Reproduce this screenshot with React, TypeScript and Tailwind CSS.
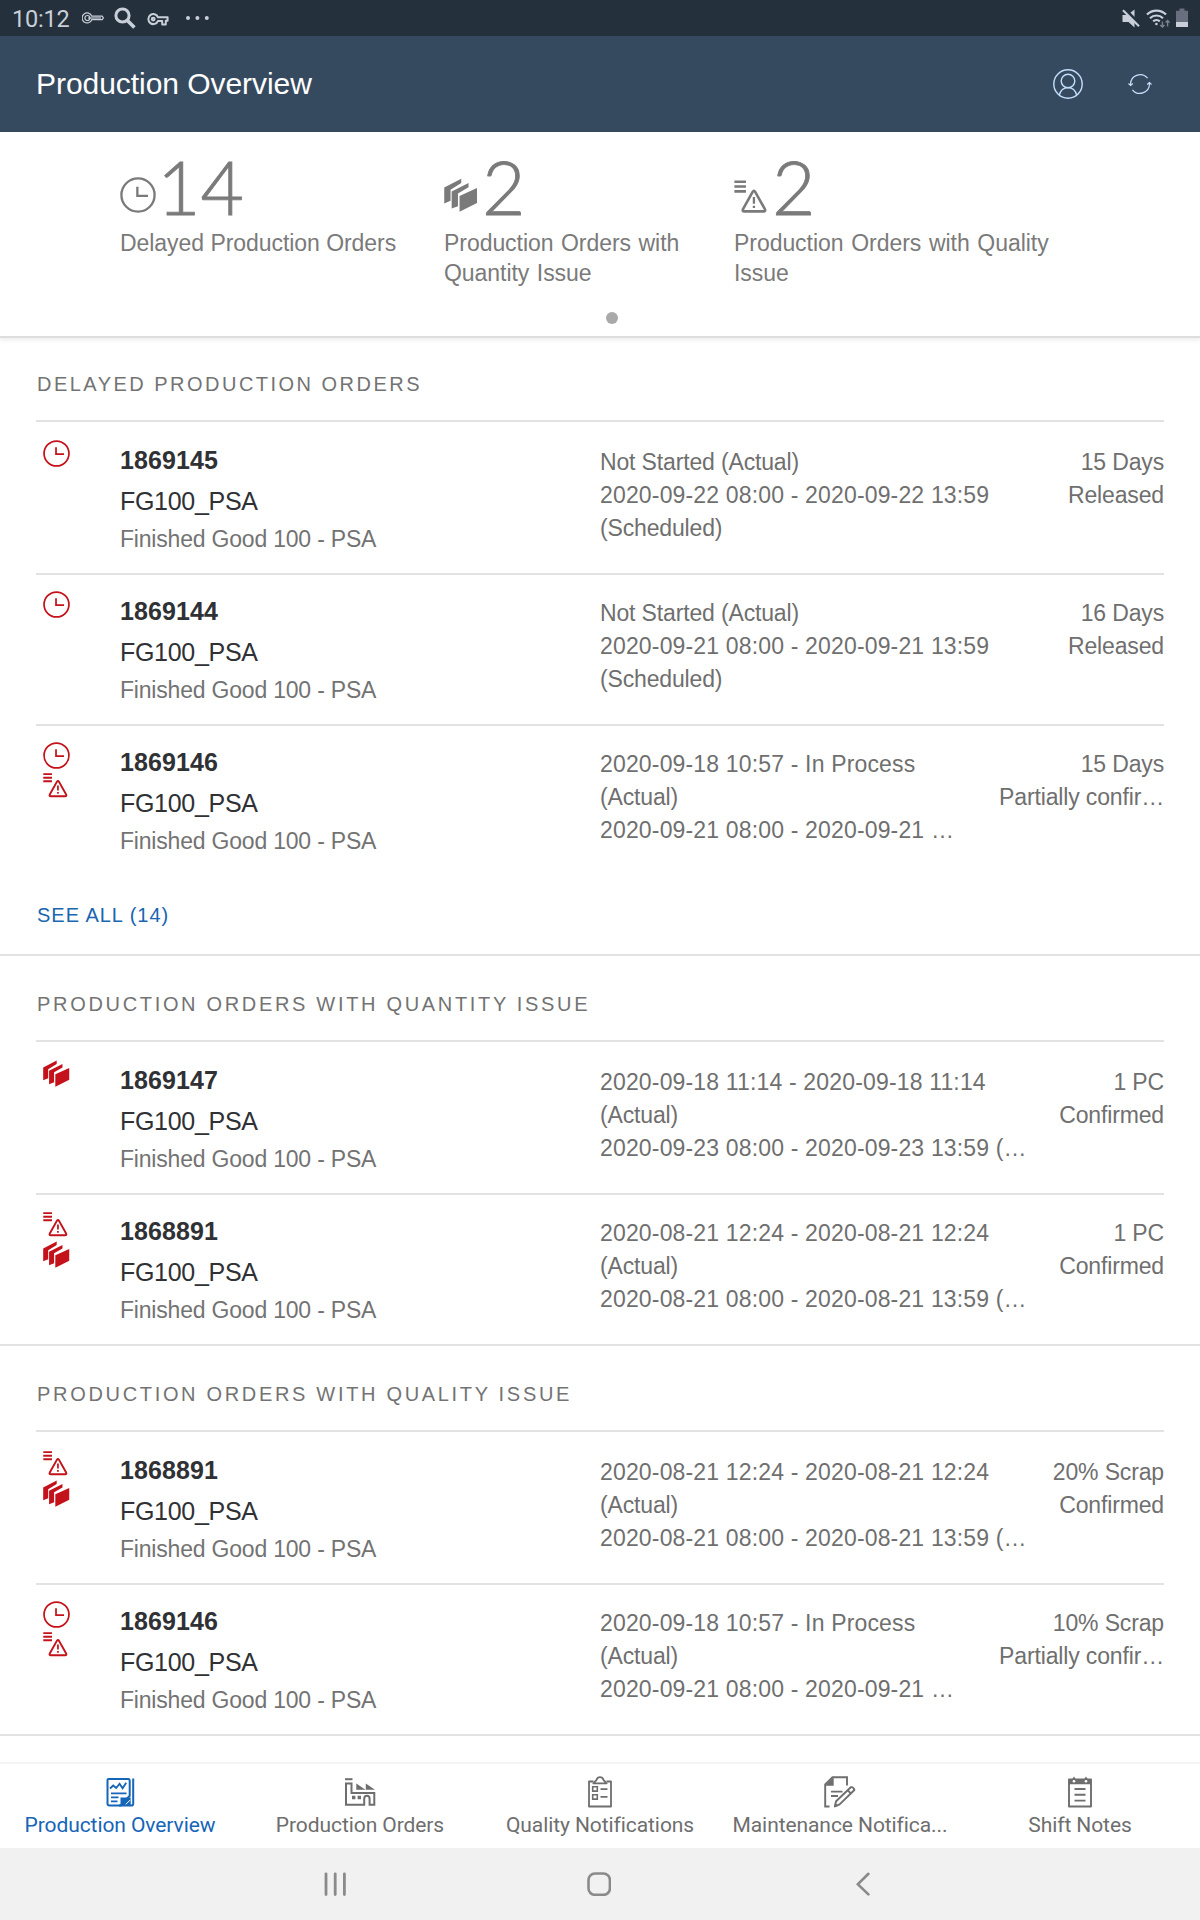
import { ReactNode } from "react";
import clsx from "clsx";

type IssueIcon = "delay" | "quality" | "quantity";

interface Order {
    id: string;
    icons: IssueIcon[];
    lines: string[];
    value: string;
    status: string;
}

interface Section {
    title: string;
    orders: Order[];
    seeAll?: string;
}

const SECTIONS: Section[] = [
    {
        title: "DELAYED PRODUCTION ORDERS",
        seeAll: "SEE ALL (14)",
        orders: [
            {
                id: "1869145",
                icons: ["delay"],
                lines: ["Not Started (Actual)", "2020-09-22 08:00 - 2020-09-22 13:59", "(Scheduled)"],
                value: "15 Days",
                status: "Released",
            },
            {
                id: "1869144",
                icons: ["delay"],
                lines: ["Not Started (Actual)", "2020-09-21 08:00 - 2020-09-21 13:59", "(Scheduled)"],
                value: "16 Days",
                status: "Released",
            },
            {
                id: "1869146",
                icons: ["delay", "quality"],
                lines: ["2020-09-18 10:57 - In Process", "(Actual)", "2020-09-21 08:00 - 2020-09-21 …"],
                value: "15 Days",
                status: "Partially confir…",
            },
        ],
    },
    {
        title: "PRODUCTION ORDERS WITH QUANTITY ISSUE",
        orders: [
            {
                id: "1869147",
                icons: ["quantity"],
                lines: ["2020-09-18 11:14 - 2020-09-18 11:14", "(Actual)", "2020-09-23 08:00 - 2020-09-23 13:59 (…"],
                value: "1 PC",
                status: "Confirmed",
            },
            {
                id: "1868891",
                icons: ["quality", "quantity"],
                lines: ["2020-08-21 12:24 - 2020-08-21 12:24", "(Actual)", "2020-08-21 08:00 - 2020-08-21 13:59 (…"],
                value: "1 PC",
                status: "Confirmed",
            },
        ],
    },
    {
        title: "PRODUCTION ORDERS WITH QUALITY ISSUE",
        orders: [
            {
                id: "1868891",
                icons: ["quality", "quantity"],
                lines: ["2020-08-21 12:24 - 2020-08-21 12:24", "(Actual)", "2020-08-21 08:00 - 2020-08-21 13:59 (…"],
                value: "20% Scrap",
                status: "Confirmed",
            },
            {
                id: "1869146",
                icons: ["delay", "quality"],
                lines: ["2020-09-18 10:57 - In Process", "(Actual)", "2020-09-21 08:00 - 2020-09-21 …"],
                value: "10% Scrap",
                status: "Partially confir…",
            },
        ],
    },
];

function IconDelay({ className }: { className?: string }) {
    return (
        <svg viewBox="0 0 28 28" fill="none" stroke="currentColor" strokeWidth="1.8" className={className}>
            <circle cx="14" cy="14" r="12.9" />
            <path d="M13.5 7.5v7.2h8.3" />
        </svg>
    );
}

function IconQuality({ className }: { className?: string }) {
    return (
        <svg viewBox="0 0 28 28" fill="none" stroke="currentColor" strokeWidth="2" className={className}>
            <path d="M0.3 2.2h9M0.3 5.9h9M0.3 9.6h9" />
            <path d="M14.5 10q1-1.6 2 0l7.5 13.4q.8 1.8-1 1.8H8q-1.8 0-1-1.8z" strokeLinejoin="round" />
            <path d="M15.5 14v5.2M15.5 20.8v1.8" strokeWidth="1.8" />
        </svg>
    );
}

function IconQuantity({ className }: { className?: string }) {
    return (
        <svg viewBox="0 0 28 28" fill="currentColor" className={className}>
            <path d="M0.2 7.8L14.2 0.6v3.6L5.4 9.6v9.2L0.2 21z" />
            <path d="M6.3 11.1L20.2 4.1v3.6L11.5 12.8v10.4l-5.2 2z" />
            <path d="M12.8 14.8L27.2 8.2v12.4l-14.4 7.2z" />
        </svg>
    );
}

const ISSUE_ICONS = {
    delay: IconDelay,
    quality: IconQuality,
    quantity: IconQuantity,
};

function StatusBar() {
    return (
        <div className="flex h-9 items-center bg-[#24303c] pr-[12px] pl-[12px] text-[#c9cfd8]">
            <span className="pt-[2px] font-[Roboto,sans-serif] text-[23.5px] leading-9 tracking-[-0.2px]">10:12</span>
            <svg viewBox="0 0 22 12" className="ml-[12px] h-3 w-[22px]" fill="none" stroke="currentColor" strokeWidth="1.2">
                <path d="M9.8 4.2h10.4l1.2 1.7-1.2 1.8H9.8A5 5 0 1 1 9.8 4.2z" />
                <circle cx="5.4" cy="6" r="2.5" />
                <path d="M6 6h13" />
            </svg>
            <svg viewBox="0 0 22 22" className="ml-[10px] h-[22px] w-[22px]" fill="none" stroke="currentColor" strokeWidth="3">
                <circle cx="8.5" cy="8.5" r="6.6" />
                <path d="M13.4 13.4l7 7" strokeWidth="3.6" />
            </svg>
            <svg viewBox="0 0 22 13" className="mt-[2px] ml-[11px] h-[13px] w-[22px]" fill="none" stroke="currentColor" strokeWidth="2">
                <path d="M11 4.3h9.6v3.4h-1.8v3.8h-3.6V7.9H11a5 5 0 1 1 0-3.6z" strokeLinejoin="round" />
                <circle cx="6.2" cy="6.1" r="1.4" />
            </svg>
            <svg viewBox="0 0 24 4" className="ml-[17px] h-1 w-6" fill="currentColor">
                <circle cx="2" cy="2" r="2" />
                <circle cx="11.4" cy="2" r="2" />
                <circle cx="20.8" cy="2" r="2" />
            </svg>
            <div className="ml-auto flex items-center">
                <svg viewBox="0 0 18 19" className="h-[19px] w-[18px]" fill="currentColor">
                    <path d="M0.5 6h5l7-5.5v18l-6-5.5h-6z" />
                    <path d="M0 0l18 18" stroke="#24303c" strokeWidth="3.4" transform="translate(1.2 -1.2)" />
                    <path d="M1 1.2l16 16" stroke="currentColor" strokeWidth="2.2" />
                </svg>
                <svg viewBox="0 0 24 19" className="ml-[6px] h-[19px] w-6" fill="none" stroke="currentColor" strokeWidth="2.2">
                    <path d="M1 5.6a13.2 13.2 0 0 1 19 0M4 9.2a9.2 9.2 0 0 1 13 0M7.2 12.4a4.8 4.8 0 0 1 6.6 0" />
                    <circle cx="10.4" cy="15" r="1.3" fill="currentColor" stroke="none" />
                    <g stroke="#78818c" strokeWidth="1.4">
                        <path d="M16.4 12.5v5.4M14.3 15.9l2.1 2.2 2.1-2.2M21.6 17.5v-5.6M19.6 13.6l2-2.1 2 2.1" />
                    </g>
                </svg>
                <svg viewBox="0 0 12 19" className="mb-[2px] ml-[6px] h-[19px] w-3">
                    <path d="M3.5 0.5h5v2.2H12V19H0V2.7h3.5z" fill="#696f7e" />
                    <path d="M0 14h12v5H0z" fill="#c9cfd8" />
                </svg>
            </div>
        </div>
    );
}

function AppHeader() {
    return (
        <header className="flex h-24 items-center bg-[#364a5f] pr-12 pl-9">
            <h1 className="pb-[2px] text-[30px] tracking-[-0.05px] text-white">Production Overview</h1>
            <svg viewBox="0 0 30 30" className="ml-auto h-[30px] w-[30px]" fill="none" stroke="#c3dffc" strokeWidth="1.4">
                <circle cx="15" cy="15" r="14.2" />
                <circle cx="15" cy="12" r="6.8" />
                <path d="M6.3 26.2c1.2-5 4.4-7.6 8.7-7.6s7.5 2.6 8.7 7.6" />
            </svg>
            <svg viewBox="0 0 24 22" className="ml-[45px] h-[22px] w-6" fill="none" stroke="#c3dffc" strokeWidth="1.2">
                <path d="M2.6 12A9.6 9.6 0 0 1 19.6 5.2M21.4 10A9.6 9.6 0 0 1 4.4 16.8" />
                <path d="M0.5 10.5l2.1 2 2.2-2M19.2 11.5l2.2-2 2.1 2" />
            </svg>
        </header>
    );
}

function Kpi({ icon, value, label, className }: { icon: ReactNode; value: string; label: ReactNode; className: string }) {
    return (
        <div className={className}>
            <div className="flex h-[68px] items-end">
                {icon}
                <span className="font-[Lato,sans-serif] text-[75px] leading-[64px] font-light [-webkit-text-stroke:0.8px_#7a7a7a]">
                    {value}
                </span>
            </div>
            <p className="mt-[10px] text-[23px] leading-[30px] tracking-[-0.05px] whitespace-nowrap">{label}</p>
        </div>
    );
}

function KpiHeader() {
    return (
        <div className="h-[206px] border-b-2 border-[#dedede] bg-white pt-[18px] text-[#7a7a7a] shadow-[0_2px_5px_rgba(0,0,0,0.08)]">
            <div className="flex pl-[120px]">
                <Kpi
                    className="w-[324px]"
                    icon={<IconDelay className="mr-px mb-[5px] h-9 w-9" />}
                    value="14"
                    label="Delayed Production Orders"
                />
                <Kpi
                    className="w-[290px] [word-spacing:1.2px]"
                    icon={<IconQuantity className="mr-[4px] mb-[5px] h-9 w-[34px]" />}
                    value="2"
                    label={<>Production Orders with<br />Quantity Issue</>}
                />
                <Kpi
                    className="w-[330px] [word-spacing:1.4px]"
                    icon={<IconQuality className="mr-[2px] mb-[3px] h-9 w-9" />}
                    value="2"
                    label={<>Production Orders with Quality<br />Issue</>}
                />
            </div>
            <div className="mx-auto mt-[24px] h-3 w-3 translate-x-3 rounded-full bg-[#a9a9a9]" />
        </div>
    );
}

function OrderRow({ order, last, border }: { order: Order; last: boolean; border: boolean }) {
    return (
        <li
            className={clsx(
                "flex h-[151px] border-b-2",
                last ? "px-9" : "mx-9",
                border ? "border-[#e2e2e2]" : "border-transparent",
            )}
        >
            <div className="flex w-[84px] flex-col gap-[3px] pt-[16px] pl-[7px] text-[#c4121a]">
                {order.icons.map((name) => {
                    const Icon = ISSUE_ICONS[name];
                    return <Icon key={name} className="h-[27px] w-[27px]" />;
                })}
            </div>
            <div className="w-[480px] pt-[21px]">
                <div className="text-[25px] leading-[30px] font-bold tracking-[0.1px] text-[#2f3135]">{order.id}</div>
                <div className="mt-[12px] text-[25px] leading-[28px] tracking-[-0.3px] text-[#2f3135]">FG100_PSA</div>
                <div className="mt-[9px] text-[23px] leading-[30px] tracking-[-0.2px] text-[#737373]">Finished Good 100 - PSA</div>
            </div>
            <div className="pt-[22px] text-[23px] leading-[33px] whitespace-nowrap text-[#6f6f6f]">
                {order.lines.map((line) => (
                    <div key={line} className={/^\d/.test(line) ? "tracking-[0.16px]" : "tracking-[-0.15px]"}>
                        {line}
                    </div>
                ))}
            </div>
            <div className="ml-auto pt-[22px] text-right text-[23px] leading-[33px] tracking-[-0.15px] whitespace-nowrap text-[#6f6f6f]">
                <div>{order.value}</div>
                <div>{order.status}</div>
            </div>
        </li>
    );
}

function OrderSection({ section }: { section: Section }) {
    return (
        <section>
            <h2
                className={clsx(
                    "mx-9 mb-[2px] h-[86px] border-b-2 border-[#e2e2e2] pt-[1px] pl-[1px] text-[20px] leading-[94px] whitespace-nowrap text-[#737373]",
                    section.seeAll ? "tracking-[2.48px]" : "tracking-[2.68px]",
                )}
            >
                {section.title}
            </h2>
            <ul>
                {section.orders.map((order, i) => {
                    const last = i === section.orders.length - 1;
                    return <OrderRow key={order.id} order={order} last={last} border={!last || !section.seeAll} />;
                })}
            </ul>
            {section.seeAll && (
                <div className="h-[79px] border-b-2 border-[#e2e2e2] pt-[23px] pl-[37px] text-[20px] leading-[30px] tracking-[0.98px] text-[#1a66b0]">
                    {section.seeAll}
                </div>
            )}
        </section>
    );
}

function IconOverview() {
    return (
        <svg viewBox="0 0 30 32" className="h-8 w-[30px]" fill="none" stroke="currentColor" strokeWidth="2">
            <path d="M3.5 3h19.8q1.4 0 1.4 1.4v15.4l-9 9.7H4.5q-2 0-2-2V4q0-1 1-1z" />
            <path d="M28.2 2.5v25.2q0 1.8-1.8 1.8H14" />
            <path d="M5 12.5l3.2-3 3 2.5 3.4-4.3 3 4.6 3.6-5.6" strokeWidth="1.8" />
            <path d="M6 17.3h15.5M6 21.3h7.5M6 25.3h6.5" strokeWidth="1.8" />
            <path d="M15.5 29v-7.5h10.2V29z" fill="currentColor" stroke="none" />
            <path d="M20.8 28.4l4.6-4.6" stroke="white" strokeWidth="1" />
        </svg>
    );
}

function IconFactory() {
    return (
        <svg viewBox="0 0 32 32" className="h-8 w-8" fill="none" stroke="currentColor" strokeWidth="2">
            <path d="M1 3.2h7.5" />
            <path d="M2 7.5h5.5v9.5h22.8v11.7h-4.7v-6q0-3-2.7-3t-2.7 3v6H2z" />
            <path d="M12.3 7.5l9.2 6.2h-9.2zM21.8 7.5l9.2 6.2h-9.2z" fill="currentColor" stroke="none" />
            <path d="M8 21.5h3.4M13.6 21.5H17" strokeWidth="3.4" />
        </svg>
    );
}

function IconClipboard() {
    return (
        <svg viewBox="0 0 24 32" className="h-8 w-6" fill="none" stroke="currentColor" strokeWidth="1.8">
            <path d="M5.5 5.5H1v25h22v-25h-4.5" strokeLinejoin="round" />
            <path d="M8.6 3.8q.8-2.6 3.4-2.6t3.4 2.6l3.2 3.6H5.4z" strokeLinejoin="round" />
            <path d="M4.7 10.7h4.6v4.4H4.7zM4.7 18.7h4.6v4.4H4.7z" strokeWidth="1.6" />
            <path d="M12.5 13.1h7M12.5 20.9h7" />
        </svg>
    );
}

function IconMaintenance() {
    return (
        <svg viewBox="0 0 32 32" className="h-8 w-8" fill="none" stroke="currentColor" strokeWidth="1.9">
            <path d="M23 9.5V1.2H8.5L1.2 8.5v22h4.3" />
            <path d="M1 9.7L9.7 1v8.7z" fill="currentColor" stroke="none" />
            <path d="M7 15.6h11.5M7 20h7" />
            <path d="M10.8 30.4l1.3-5.1L26.8 11.2q2.6-.6 3.6 2.8L15.6 28.4z" strokeLinejoin="round" />
            <path d="M23.6 14.2l3.5 3.4" />
            <path d="M10.3 31l1-3.7 2.8 2.6z" fill="currentColor" stroke="none" />
        </svg>
    );
}

function IconNotes() {
    return (
        <svg viewBox="0 0 24 32" className="h-8 w-6" fill="none" stroke="currentColor" strokeWidth="1.9">
            <path d="M1 3.5h22v27H1z" strokeLinejoin="round" />
            <path d="M0.5 3.3h3.6L6 .5 7.9 3.3h8.2L18 .5l1.9 2.8h3.6v5H.5z" fill="currentColor" stroke="none" />
            <circle cx="6" cy="5.2" r="1.3" fill="white" stroke="none" />
            <circle cx="18" cy="5.2" r="1.3" fill="white" stroke="none" />
            <path d="M6.5 13h11M6.5 18.8h11M6.5 24.6h11" />
        </svg>
    );
}

const TABS = [
    { label: "Production Overview", Icon: IconOverview, active: true },
    { label: "Production Orders", Icon: IconFactory },
    { label: "Quality Notifications", Icon: IconClipboard },
    { label: "Maintenance Notifica...", Icon: IconMaintenance },
    { label: "Shift Notes", Icon: IconNotes },
];

function TabBar() {
    return (
        <nav className="grid h-[86px] grid-cols-5 border-t-2 border-[#f5f5f5] bg-white">
            {TABS.map(({ label, Icon, active }) => (
                <div
                    key={label}
                    className={clsx("flex flex-col items-center pt-[12px]", active ? "text-[#1565b8]" : "text-[#6e6e6e]")}
                >
                    <Icon />
                    <span className="mt-[3px] font-[Roboto,sans-serif] text-[21px] leading-[28px] tracking-[-0.08px] whitespace-nowrap">{label}</span>
                </div>
            ))}
        </nav>
    );
}

function SystemNav() {
    return (
        <div className="flex h-[72px] items-center bg-[#f1f1f1] pl-[324px] text-[#8a8a8a]">
            <svg viewBox="0 0 24 24" className="h-6 w-6" fill="none" stroke="currentColor" strokeWidth="2.8" strokeLinecap="round">
                <path d="M2 1.8v20.8M11.2 1.8v20.8M20.4 1.8v20.8" />
            </svg>
            <svg viewBox="0 0 24 24" className="ml-[239px] h-6 w-6" fill="none" stroke="currentColor" strokeWidth="2.6">
                <rect x="1.5" y="1.5" width="21.4" height="21.4" rx="6.5" />
            </svg>
            <svg viewBox="0 0 14 24" className="ml-[245px] h-6 w-[14px]" fill="none" stroke="currentColor" strokeWidth="2.6" strokeLinecap="round">
                <path d="M12.4 1.8L1.8 12.2l10.6 10.2" />
            </svg>
        </div>
    );
}

export default function App() {
    return (
        <div className="flex h-[1920px] w-[1200px] flex-col overflow-hidden bg-white font-['Liberation_Sans',Arial,sans-serif]">
            <StatusBar />
            <AppHeader />
            <KpiHeader />
            <main className="-mt-[2px] flex-1">
                {SECTIONS.map((section) => (
                    <OrderSection key={section.title} section={section} />
                ))}
            </main>
            <TabBar />
            <SystemNav />
        </div>
    );
}
